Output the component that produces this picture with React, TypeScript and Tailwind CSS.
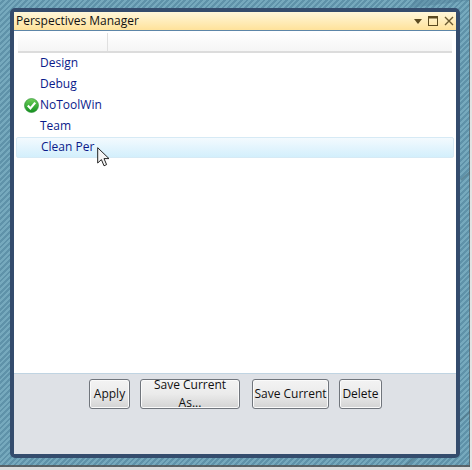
const font = "font-['Open_Sans','Noto_Sans',sans-serif]";

function Row({ label, check, selected }: { label: string; check?: boolean; selected?: boolean }) {
  return (
    <div
      className={
        "relative flex h-[21px] items-center pl-[24px] text-[12px] text-[#0a1a8a] " +
        (selected ? "rounded-[2px] border border-[#d6eaf5] bg-gradient-to-b from-[#f3fafe] to-[#d3effc] pl-[23px]" : "")
      }
    >
      {check && (
        <svg className="absolute left-[8px] top-[3px]" width="15" height="15" viewBox="0 0 15 15">
          <defs>
            <linearGradient id="g" x1="0" y1="0" x2="0" y2="1">
              <stop offset="0" stopColor="#6fd05a" />
              <stop offset="1" stopColor="#12901f" />
            </linearGradient>
          </defs>
          <circle cx="7.5" cy="7.5" r="7" fill="url(#g)" stroke="#2c8a35" strokeWidth="0.6" />
          <path d="M3.8 7.6 L6.4 10.4 L11.2 4.6" fill="none" stroke="#fff" strokeWidth="2.2" />
        </svg>
      )}
      {label}
    </div>
  );
}

function Btn({ label, w, className = "" }: { label: string; w: string; className?: string }) {
  return (
    <button
      className={
        "flex h-[30px] items-center justify-center rounded-[3px] border border-[#70757c] bg-gradient-to-b from-[#f3f3f3] via-[#ebebeb] to-[#d3d3d3] text-[12px] text-[#111] shadow-[inset_0_0_0_1px_#fafafa] " +
        w +
        " " +
        className
      }
    >
      {label}
    </button>
  );
}

export default function App() {
  return (
    <div
      className={
        "relative h-[470px] w-[472px] overflow-hidden bg-[#6b9db3] bg-[repeating-linear-gradient(135deg,#76a9bd_0px,#76a9bd_2px,#5f92a9_2px,#5f92a9_4px)] pl-[10px] pt-[8px] " +
        font
      }
    >
      <svg className="absolute left-0 top-0" width="472" height="470" viewBox="0 0 472 470">
        <path d="M415 0 L472 0 L472 0 L410 8 Z" fill="#4f7f96" opacity="0.45" />
        <path d="M461 180 L472 170 M461 420 L472 410 M400 470 L461 420" stroke="#4f7586" strokeWidth="2" opacity="0.6" />
        <rect x="0" y="465" width="472" height="2" fill="#555" opacity="0.8" />
        <rect x="0" y="467" width="472" height="3" fill="#ddd" />
        <rect x="469" y="0" width="1" height="467" fill="#555" opacity="0.6" />
        <rect x="470" y="0" width="2" height="470" fill="#e4e4e4" />
      </svg>
      <div className="relative flex h-[450px] w-[450px] flex-col rounded-[5px] border-[4px] border-[#344c6d] bg-white">
        <div className="flex h-[19px] items-center justify-between border-b border-[#5d86a8] bg-gradient-to-b from-[#fff7da] to-[#ffe29a] pl-[2px] pr-[2px] text-[12px] text-[#111]">
          <span>Perspectives Manager</span>
          <div className="flex items-center gap-[6px]">
            <svg width="8" height="5" viewBox="0 0 8 5"><path d="M0 0 H8 L4 5 Z" fill="#5b4a20" /></svg>
            <svg width="10" height="10" viewBox="0 0 10 10">
              <rect x="0.5" y="0.5" width="9" height="9" fill="none" stroke="#5b4a20" />
              <rect x="0" y="0" width="10" height="2.5" fill="#5b4a20" />
            </svg>
            <svg width="10" height="10" viewBox="0 0 10 10">
              <path d="M1 1 L9 9 M9 1 L1 9" stroke="#6b5a30" strokeWidth="1.4" />
            </svg>
          </div>
        </div>
        <div className="flex flex-1 flex-col bg-white pl-[2px] pr-[2px]">
          <div className="ml-[2px] mr-[2px] mt-[2px] flex h-[20px] border-b-2 border-[#dcdcdc] bg-gradient-to-b from-white to-[#f5f5f5]">
            <div className="w-[90px] border-r border-[#e0e0e0]" />
          </div>
          <div className="mt-[-0.5px] pt-[0px]">
            <Row label="Design" />
            <Row label="Debug" />
            <Row label="NoToolWin" check />
            <Row label="Team" />
            <Row label="Clean Per" selected />
          </div>
        </div>
        <div className="flex h-[81px] items-start gap-[10px] border-t border-[#c0d4e2] bg-[#dee1e6] pl-[75px] pt-[5px]">
          <Btn label="Apply" w="w-[41px]" />
          <Btn label="Save Current As..." w="w-[100px]" />
          <Btn label="Save Current" w="w-[77px]" className="ml-[2px]" />
          <Btn label="Delete" w="w-[43px]" />
        </div>
        <svg className="absolute left-[83px] top-[135px]" width="13" height="20" viewBox="0 0 13 20">
          <path d="M0.7 0.7 V16 L4.4 12.6 L7 18.8 L9.6 17.6 L7 11.6 L12 11.6 Z" fill="#f4f4f4" stroke="#222" strokeWidth="1" />
        </svg>
      </div>
    </div>
  );
}
